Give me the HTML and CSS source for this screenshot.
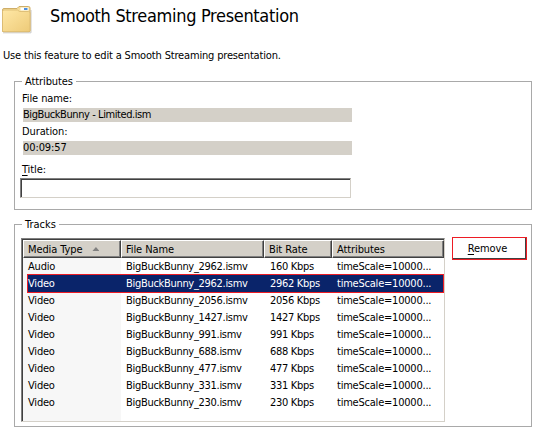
FILE: index.html
```
<!DOCTYPE html>
<html lang="en">
<head>
<meta charset="utf-8">
<title>Smooth Streaming Presentation</title>
<link rel="stylesheet" href="styles.css">
</head>
<body>
<header class="page-header">
  <svg class="folder" width="32" height="32" viewBox="0 0 32 32" aria-hidden="true">
    <defs>
      <linearGradient id="front" x1="0" y1="0" x2="1" y2="1"><stop offset="0" stop-color="#ffe8a6"/><stop offset="1" stop-color="#edca78"/></linearGradient>
    </defs>
    <path d="M2 29.800H30V7" fill="none" stroke="#c9c9c9" stroke-width="1"/>
    <path d="M1.500 7Q1.500 5.500 3 5.500H16L18 3.500H27.500Q29 3.500 29 5V28.500H1.500Z" fill="#f5dc97" stroke="#cfae68"/>
    <rect x="19.500" y="4.500" width="8" height="3" fill="#fff"/>
    <rect x="23" y="5" width="3.500" height="2" fill="#4c8fe0"/>
    <path d="M1.500 8.500Q1.500 7 3 7H16.500L18.500 8.500H27.500Q29 8.500 29 10V27.500Q29 28.800 27.500 28.800H3Q1.500 28.800 1.500 27.500Z" fill="url(#front)" stroke="#d9b970" stroke-width=".8"/>
  </svg>
  <h1>Smooth Streaming Presentation</h1>
</header>
<p class="intro">Use this feature to edit a Smooth Streaming presentation.</p>

<section class="group attributes">
  <h2><span>Attributes</span></h2>
  <div class="label">File name:</div>
  <div class="value file-value">BigBuckBunny - Limited.ism</div>
  <div class="label">Duration:</div>
  <div class="value">00:09:57</div>
  <label class="label title-label" for="title"><u>T</u>itle:</label>
  <input id="title" type="text">
</section>

<section class="group tracks">
  <h2><span>Tracks</span></h2>
  <div class="tracks-body">
    <div class="list">
      <div class="head"><span class="type">Media Type<i class="sort"></i></span><span>File Name</span><span>Bit Rate</span><span>Attributes</span></div>
      <div class="row"><span>Audio</span><span>BigBuckBunny_2962.ismv</span><span>160 Kbps</span><span>timeScale=10000...</span></div>
      <div class="row selected"><span>Video</span><span>BigBuckBunny_2962.ismv</span><span>2962 Kbps</span><span>timeScale=10000...</span></div>
      <div class="row"><span>Video</span><span>BigBuckBunny_2056.ismv</span><span>2056 Kbps</span><span>timeScale=10000...</span></div>
      <div class="row"><span>Video</span><span>BigBuckBunny_1427.ismv</span><span>1427 Kbps</span><span>timeScale=10000...</span></div>
      <div class="row"><span>Video</span><span>BigBuckBunny_991.ismv</span><span>991 Kbps</span><span>timeScale=10000...</span></div>
      <div class="row"><span>Video</span><span>BigBuckBunny_688.ismv</span><span>688 Kbps</span><span>timeScale=10000...</span></div>
      <div class="row"><span>Video</span><span>BigBuckBunny_477.ismv</span><span>477 Kbps</span><span>timeScale=10000...</span></div>
      <div class="row"><span>Video</span><span>BigBuckBunny_331.ismv</span><span>331 Kbps</span><span>timeScale=10000...</span></div>
      <div class="row"><span>Video</span><span>BigBuckBunny_230.ismv</span><span>230 Kbps</span><span>timeScale=10000...</span></div>
    </div>
    <button type="button"><span><u>R</u>emove</span></button>
  </div>
</section>
</body>
</html>
```
FILE: styles.css
```
* { box-sizing: border-box; }
body {
  margin: 0;
  height: 434px;
  overflow: hidden;
  background: #fff;
  color: #000;
  font: 11px/14px Tahoma, "DejaVu Sans Condensed", "DejaVu Sans", sans-serif;
  letter-spacing: -0.1px;
  white-space: nowrap;
}
h1, h2, p { margin: 0; font-weight: normal; }
u { text-underline-offset: 2px; text-decoration-thickness: 1px; }
.page-header { display: flex; height: 49px; padding: 3px 0 0 1px; }
.folder { flex: none; }
h1 { margin: 1px 0 0 17px; font-size: 18px; line-height: 24px; letter-spacing: -0.32px; }
.intro { padding-left: 3px; height: 32px; letter-spacing: -0.17px; }
.group { width: 518px; margin-left: 14px; border: 1px solid #a9a9a9; }
.group h2 { height: 14px; margin: -7px 0 0 7px; font-size: 11px; line-height: 14px; }
.group h2 span { display: inline-block; height: 14px; padding: 0 3px; background: #fff; }
.attributes { height: 129px; padding-left: 5px; }
.attributes h2 { margin-left: 2px; }
.label { display: block; height: 19px; padding: 3px 0 0 2px; }
.value { width: 329px; height: 14px; margin-left: 3px; background: #d4d0c8; }
.file-value { letter-spacing: -0.42px; }
.title-label { height: 23px; padding-top: 8px; }
input {
  display: block;
  width: 331px;
  height: 20px;
  padding: 0 2px;
  background: #fff;
  border: 1px solid;
  border-color: #808080 #d4d0c8 #d4d0c8 #808080;
  border-radius: 0;
  box-shadow: inset 1px 1px #404040;
  outline: 0;
}
.tracks { height: 203px; margin-top: 14px; }
.tracks h2 { letter-spacing: 0; }
.tracks-body { display: flex; align-items: flex-start; gap: 7px; padding: 6px 0 0 6px; }
.list {
  width: 424px;
  height: 184px;
  border: 1px solid;
  border-color: #808080 #d4d0c8 #d4d0c8 #808080;
  box-shadow: inset 1px 1px #404040;
  padding: 1px 0 0 1px;
  background: linear-gradient(90deg, #f7f7f7 99px, #fff 99px);
}
.head, .row { display: grid; grid-template-columns: 98px 143px 68px 112px; }
.head { height: 17px; margin-bottom: 1px; }
.head span {
  padding: 2px 0 0 4px;
  line-height: 14px;
  background: #d4d0c8;
  border: 1px solid;
  border-color: #fff #404040 #404040 #fff;
  box-shadow: inset -1px -1px #808080;
}
.head .type { display: flex; gap: 10px; }
.sort { width: 7px; height: 4px; margin-top: 4px; background: #808080; clip-path: polygon(50% 0, 100% 100%, 0 100%); }
.row { height: 17px; line-height: 17px; letter-spacing: -0.3px; }
.row span { padding-left: 5px; }
.row span:first-child { letter-spacing: -0.2px; }
.row span:nth-child(3) { padding-left: 6px; }
.row span:last-child { letter-spacing: -0.22px; }
.selected {
  height: 19px;
  margin: -1px 0 -1px 4px;
  grid-template-columns: 94px 143px 68px 112px;
  background: #0a246a;
  border: 1px solid #ed1c24;
  color: #fff;
}
.selected span { margin-left: -1px; }
.row.selected span:first-child { padding-left: 1px; }
button {
  width: 75px;
  height: 23px;
  margin-top: -1px;
  padding: 1px 4px 0 0;
  border: 1px solid #ed1c24;
  border-radius: 0;
  background: #fff;
  box-shadow: inset -1px -1px #404040;
  color: #000;
  font: inherit;
  letter-spacing: -0.1px;
}
```
